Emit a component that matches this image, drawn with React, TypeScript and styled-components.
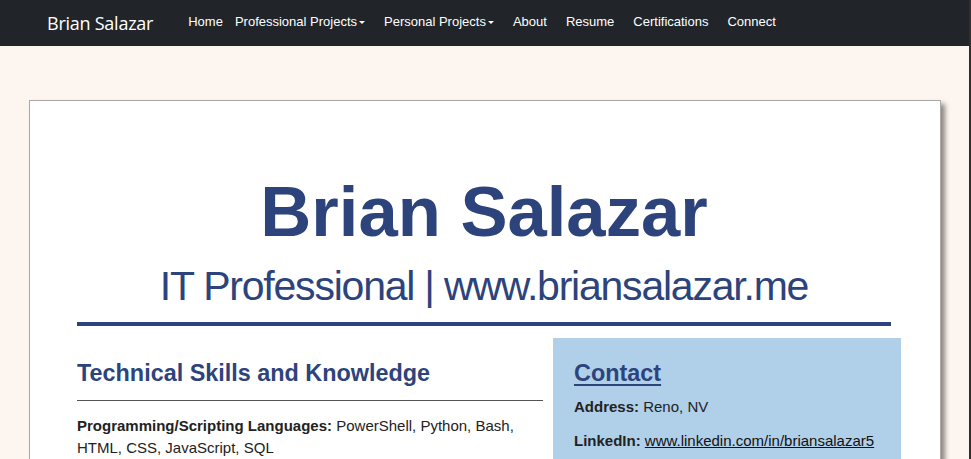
import React from "react";
import styled, { createGlobalStyle } from "styled-components";

const GlobalStyle = createGlobalStyle`
  html, body { margin: 0; padding: 0; }
  body {
    background: #fdf5ef;
    border-right: 2px solid #2f2f2f;
    font-family: "Liberation Sans", Arial, sans-serif;
    color: #222;
    overflow: hidden;
  }
`;

const NAVY = "#2d437c";

const NavBar = styled.nav`
  height: 46px;
  background: #212529;
  display: flex;
  align-items: center;
  padding-left: 47px;
`;

const Brand = styled.a`
  font-family: "Open Sans", "Noto Sans", sans-serif;
  font-size: 18px;
  letter-spacing: -0.25px;
  color: #fff;
  text-decoration: none;
  margin-right: 35px;
`;

const NavList = styled.ul`
  display: flex;
  list-style: none;
  margin: -3px 0 0 0;
  padding: 0;
  gap: 19px;
`;

const NavItem = styled.li<{ $tight?: boolean }>`
  font-family: "Liberation Sans", Arial, sans-serif;
  font-size: 13px;
  color: #fff;
  display: flex;
  align-items: center;
  margin-right: ${(p) => (p.$tight ? "-7px" : "0")};
`;

const Caret = styled.span`
  display: inline-block;
  margin-left: 2px;
  width: 0;
  height: 0;
  border-left: 3px solid transparent;
  border-right: 3px solid transparent;
  border-top: 3.5px solid #fff;
  margin-top: 1px;
`;

const Card = styled.main`
  margin: 54px 28px 0 29px;
  background: #fff;
  border: 1px solid #a9a9a9;
  box-shadow: 4px 4px 5px rgba(0, 0, 0, 0.45);
  padding: 72px 49px 40px 47px;
`;

const Title = styled.h1`
  margin: 0;
  text-align: center;
  font-family: "Liberation Sans", Arial, sans-serif;
  font-weight: 700;
  font-size: 70.6px;
  line-height: 78px;
  color: ${NAVY};
`;

const Subtitle = styled.h2`
  margin: 12px 0 0 0;
  text-align: center;
  font-family: "Liberation Sans", Arial, sans-serif;
  font-weight: 400;
  font-size: 41px;
  line-height: 47px;
  letter-spacing: -1.22px;
  color: ${NAVY};
`;

const Rule = styled.hr`
  margin: 12px 0 0 0;
  border: none;
  height: 4px;
  background: ${NAVY};
`;

const Columns = styled.div`
  display: grid;
  grid-template-columns: 466px 348px;
  gap: 10px;
  margin: 12px -10px 0 0;
`;

const Column = styled.section<{ $shaded?: boolean }>`
  padding: 22px ${(p) => (p.$shaded ? "20px" : "0")} 30px ${(p) => (p.$shaded ? "21px" : "0")};
  background: ${(p) => (p.$shaded ? "#b0cfe9" : "transparent")};
`;

const SectionHeading = styled.h3<{ $underlined?: boolean }>`
  margin: 0;
  font-family: "Liberation Sans", Arial, sans-serif;
  font-weight: 700;
  font-size: 23.4px;
  line-height: 26px;
  color: ${NAVY};
  text-decoration: ${(p) => (p.$underlined ? "underline" : "none")};
  text-decoration-thickness: 2px;
  text-underline-offset: 3px;
`;

const Divider = styled.hr`
  margin: 14px 0 0 0;
  border: none;
  height: 1px;
  background: #555;
`;

const Para = styled.p<{ $top: number }>`
  margin: ${(p) => p.$top}px 0 0 0;
  font-size: 15px;
  line-height: 22px;
  color: #222;
`;

const Label = styled.strong`
  font-weight: 700;
`;

const Link = styled.a`
  color: #111;
  text-decoration: underline;
`;

export default function App() {
  return (
    <>
      <GlobalStyle />
      <NavBar>
        <Brand href="#">Brian Salazar</Brand>
        <NavList>
          <NavItem $tight>Home</NavItem>
          <NavItem>
            Professional Projects
            <Caret />
          </NavItem>
          <NavItem>
            Personal Projects
            <Caret />
          </NavItem>
          <NavItem>About</NavItem>
          <NavItem>Resume</NavItem>
          <NavItem>Certifications</NavItem>
          <NavItem>Connect</NavItem>
        </NavList>
      </NavBar>
      <Card>
        <Title>Brian Salazar</Title>
        <Subtitle>IT Professional | www.briansalazar.me</Subtitle>
        <Rule />
        <Columns>
          <Column>
            <SectionHeading>Technical Skills and Knowledge</SectionHeading>
            <Divider />
            <Para $top={14}>
              <Label>Programming/Scripting Languages:</Label> PowerShell, Python, Bash,
              HTML, CSS, JavaScript, SQL
            </Para>
            <Para $top={12}>
              <Label>Operating Systems:</Label> Windows, Linux, macOS
            </Para>
          </Column>
          <Column $shaded>
            <SectionHeading $underlined>Contact</SectionHeading>
            <Para $top={10}>
              <Label>Address:</Label> Reno, NV
            </Para>
            <Para $top={12}>
              <Label>LinkedIn:</Label>{" "}
              <Link href="#">www.linkedin.com/in/briansalazar5</Link>
            </Para>
            <Para $top={12}>
              <Label>Website:</Label> <Link href="#">www.briansalazar.me</Link>
            </Para>
          </Column>
        </Columns>
      </Card>
    </>
  );
}
